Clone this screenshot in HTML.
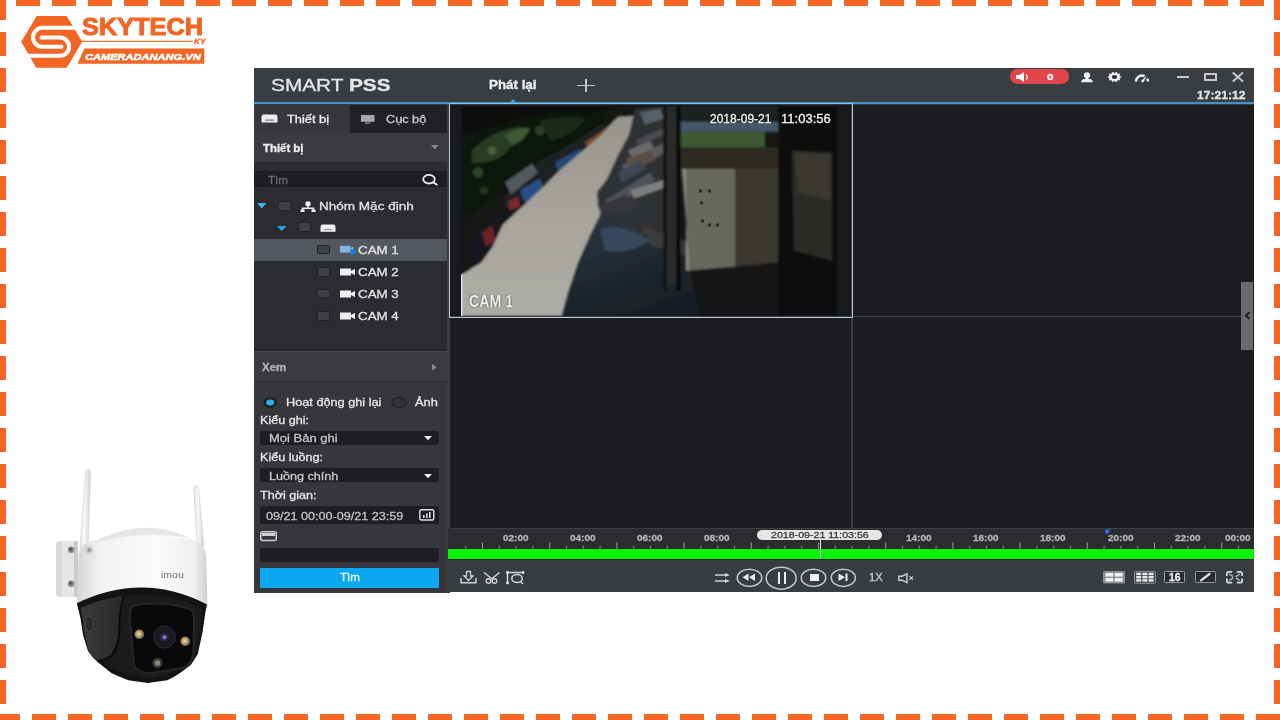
<!DOCTYPE html>
<html><head><meta charset="utf-8">
<style>
*{margin:0;padding:0;box-sizing:border-box}
html,body{width:1280px;height:720px;overflow:hidden;background:#fff;font-family:"Liberation Sans",sans-serif;position:relative}
.a{position:absolute}
.t{position:absolute;white-space:nowrap;line-height:1;transform-origin:0 0;-webkit-text-stroke:0.3px currentColor}
svg{position:absolute;overflow:visible}
</style></head><body>

<svg style="left:0;top:0" width="1280" height="720">
<g stroke="#f26522" stroke-width="6" fill="none">
<line x1="16" y1="3" x2="1280" y2="3" stroke-dasharray="24 12"/>
<line x1="-4" y1="717" x2="1280" y2="717" stroke-dasharray="24 12"/>
<line x1="3" y1="-4" x2="3" y2="720" stroke-dasharray="24 12"/>
<line x1="1277" y1="-4" x2="1277" y2="720" stroke-dasharray="24 12"/>
</g></svg>
<svg style="left:0;top:0" width="220" height="80">
<polygon points="36.7,15.9 66.7,15.9 82.2,41.8 66.7,67.7 36.2,67.7 21.2,41.8" fill="#f26522"/>
<g fill="none" stroke="#fff" stroke-width="4">
<path d="M86,27.8 H42.5 A9.5,9.5 0 0 0 42.5,46.8 H61.5" stroke-linecap="butt"/>
<path d="M41.5,37.6 H60 A9.1,9.1 0 0 1 60,55.8 H16"/>
</g>
<circle cx="61.5" cy="46.8" r="2" fill="#fff"/>
<circle cx="41.5" cy="37.6" r="2" fill="#fff"/>
<rect x="81.2" y="40.8" width="111.6" height="1.1" fill="#f26522"/>
<polygon points="84.4,48.4 204.3,48.4 204.3,63.8 77.6,63.8" fill="#f26522"/>
</svg>
<div class="t" style="left:82.30px;top:14.86px;font-size:24.5px;color:#f26522;font-weight:bold;font-style:normal;transform:scaleX(1.0334813802528187);-webkit-text-stroke:1.0px #f26522">SKYTECH</div>
<div class="t" style="left:194.30px;top:39.10px;font-size:6.5px;color:#f26522;font-weight:bold;font-style:italic;transform:scaleX(1.2735326688815063);">KY</div>
<div class="t" style="left:85.40px;top:53.00px;font-size:8.5px;color:#fff;font-weight:bold;font-style:italic;transform:scaleX(1.303221446271683);-webkit-text-stroke:0.55px #fff">CAMERADANANG.VN</div>
<svg style="left:0;top:0" width="240" height="720">
<defs>
<linearGradient id="wh" x1="0" x2="1" y1="0" y2="0">
<stop offset="0" stop-color="#d4d4d4"/><stop offset="0.18" stop-color="#f2f2f2"/><stop offset="0.6" stop-color="#fbfbfb"/><stop offset="0.9" stop-color="#f0f0f0"/><stop offset="1" stop-color="#cfcfcf"/>
</linearGradient>
<linearGradient id="bk" x1="0" x2="1" y1="0" y2="0">
<stop offset="0" stop-color="#2e2e30"/><stop offset="0.35" stop-color="#19191b"/><stop offset="1" stop-color="#161618"/>
</linearGradient>
<linearGradient id="ant" x1="0" x2="1" y1="0" y2="0"><stop offset="0" stop-color="#e4e4e4"/><stop offset="0.45" stop-color="#f8f8f8"/><stop offset="1" stop-color="#d2d2d2"/></linearGradient>
<radialGradient id="led" cx="0.45" cy="0.45" r="0.6">
<stop offset="0" stop-color="#f6e2a8"/><stop offset="0.55" stop-color="#a8946a"/><stop offset="1" stop-color="#3a3630"/>
</radialGradient>
<radialGradient id="lens" cx="0.5" cy="0.5" r="0.5">
<stop offset="0" stop-color="#d0d0f0"/><stop offset="0.2" stop-color="#6a66b0"/><stop offset="0.5" stop-color="#2c2a48"/><stop offset="1" stop-color="#141418"/>
</radialGradient>
</defs>
<!-- bracket -->
<path d="M60,541 H78 V597 H60 Q56,597 56,593 V545 Q56,541 60,541 Z" fill="#e6e6e6"/>
<path d="M74,541 H78 V597 H74 Z" fill="#cacaca"/>
<path d="M60,541 H62 V597 H60 Q56,597 56,593 V545 Q56,541 60,541 Z" fill="#d8d8d8"/>
<circle cx="71.2" cy="549.8" r="3.3" fill="#8a8a8a"/><circle cx="70.6" cy="549.2" r="1.6" fill="#5a5a5a"/>
<circle cx="71.2" cy="583.7" r="3.3" fill="#8a8a8a"/><circle cx="70.6" cy="583.1" r="1.6" fill="#5a5a5a"/>
<!-- antennas -->
<path d="M85.7,472.2 A2.45,2.45 0 0 1 90.6,472.2 L87.8,556 L79.4,556 Z" fill="url(#ant)" stroke="#d4d4d4" stroke-width="0.7"/>
<path d="M193.6,488.2 A2.5,2.5 0 0 1 198.6,488.2 L203.7,546 L197.5,546 Z" fill="url(#ant)" stroke="#d0d0d0" stroke-width="0.7"/>
<!-- white dome body -->
<path d="M76.8,606 L78.5,556 Q80,543 92,541 Q143,530 194,540 Q205.5,544 206.2,556 L207.5,606 Z" fill="url(#wh)"/>
<path d="M90.5,543.3 Q143,515 190,538 Q143,530 90.5,543.3 Z" fill="#e6e6e6"/>
<circle cx="89.2" cy="550" r="4.2" fill="#d0d0d0"/><circle cx="89.2" cy="550" r="2" fill="#9a9a9a"/>
<!-- black body -->
<linearGradient id="arm" x1="0" x2="1" y1="0" y2="0"><stop offset="0" stop-color="#3a3a3d"/><stop offset="1" stop-color="#28282b"/></linearGradient>
<path d="M76.8,603.3 Q142.5,571.2 207,604.4 L205.4,612.2 L202.6,631.7 L197.8,653.9 Q194,660 190.8,665 L179.7,673.3 Q173,678 167.2,680.3 L147.8,683 L128.3,680.3 Q120,677 111.7,673.3 L97.8,662.2 Q92,657 88,651 L83.2,635.8 L80.4,617.8 Z" fill="#131315"/>
<path d="M81,608 Q142.5,580 203,609 L201,628 L197,650 Q188,668 165,676 L148,678 Q125,676 108,666 L97,657 Q90,650 87,640 L83.5,620 Z" fill="#1b1b1d"/>
<path d="M81,608 Q100,599 124,596 Q121,606 120,614 L119,636 Q117,650 111,656 Q104,661 97.8,660.8 Q91,657 88,649 L84,630 Z" fill="url(#arm)"/>
<path d="M124,596 Q121,606 120,614 L119,636 Q117,650 111,656 Q104,661 97.8,660.8" fill="none" stroke="#0c0c0e" stroke-width="2.2"/>
<path d="M133,606 Q160,600 190,609 Q194,612 194,620 L193.6,652 Q192,664 184,667.8 L150,673.3 Q137,673 133.9,665 L129.7,617.8 Q130,608 133,606 Z" fill="#09090b" stroke="#26262a" stroke-width="2"/>
<ellipse cx="89.4" cy="624" rx="4.2" ry="7.6" fill="#2a2a2d" stroke="#47474a" stroke-width="1"/>
<circle cx="164.4" cy="637.2" r="11" fill="#1a1a1e"/>
<circle cx="164.4" cy="637.2" r="11" fill="none" stroke="#2c2c30" stroke-width="1"/>
<circle cx="164.4" cy="637.2" r="6" fill="url(#lens)"/>
<circle cx="139.4" cy="634.4" r="4.9" fill="url(#led)"/>
<circle cx="185.3" cy="641.4" r="4.9" fill="url(#led)"/>
<circle cx="157.5" cy="662.9" r="5" fill="#3e3c38"/>
<circle cx="157.5" cy="662.9" r="2.6" fill="#8a867c"/>
</svg>
<div class="t" style="left:161.00px;top:570.68px;font-size:9px;color:#6a6a6a;font-weight:normal;font-style:normal;transform:scaleX(1.1256038647342996);letter-spacing:0.3px;-webkit-text-stroke:0">imou</div>
<div class="a" style="left:254.00px;top:68.00px;width:1000.00px;height:524.00px;background:#393c41;"></div>
<div class="a" style="left:254.00px;top:68.00px;width:1000.00px;height:34.00px;background:#3a3d42;"></div>
<div class="a" style="left:254.00px;top:102.00px;width:1000.00px;height:2.00px;background:#3b97c8;"></div>
<svg style="left:508px;top:99px" width="10" height="4"><polygon points="1.5,3.5 5,0.3 8.5,3.5" fill="#3aa8e0"/></svg>
<div class="t" style="left:271.00px;top:77.46px;font-size:17px;color:#e6e6e6;font-weight:normal;font-style:normal;transform:scaleX(1.2249078246620237);">SMART <b>PSS</b></div>
<div class="t" style="left:489.00px;top:78.64px;font-size:12px;color:#f0f0f0;font-weight:bold;font-style:normal;transform:scaleX(1.1126727570859687);">Phát lại</div>
<div class="a" style="left:576.50px;top:84.70px;width:18.50px;height:1.50px;background:#c8c8c8;"></div>
<div class="a" style="left:585.00px;top:78.50px;width:1.50px;height:13.50px;background:#c8c8c8;"></div>
<div class="a" style="left:1010.30px;top:69.00px;width:59.20px;height:14.60px;background:#e2454a;border-radius:7.3px"></div>
<svg style="left:1016px;top:71.5px" width="14" height="10">
<polygon points="0,3 3.5,3 8,0 8,10 3.5,7 0,7" fill="#fff"/>
<path d="M10,2.5 Q12.5,5 10,7.5" stroke="#fff" stroke-width="1.3" fill="none"/>
</svg>
<div class="t" style="left:1046.80px;top:72.98px;font-size:9px;color:#fff;font-weight:bold;font-style:normal;transform:scaleX(1.2948207171314743);">0</div>
<svg style="left:1080px;top:71px" width="15" height="13">
<circle cx="7" cy="4.3" r="3.1" fill="#eee"/>
<path d="M1.2,11.2 Q1.2,8.2 4.5,8 L9.5,8 Q12.8,8.2 12.8,11.2 Z" fill="#eee"/>
<rect x="5.6" y="6.5" width="2.8" height="2" fill="#eee"/>
</svg>
<svg style="left:1107px;top:70.8px" width="15" height="12">
<polygon points="14.70,6.00 12.43,7.25 13.32,9.29 10.55,9.26 9.72,11.33 7.50,10.03 5.28,11.33 4.45,9.26 1.68,9.29 2.57,7.25 0.30,6.00 2.57,4.75 1.68,2.71 4.45,2.74 5.28,0.67 7.50,1.97 9.72,0.67 10.55,2.74 13.32,2.71 12.43,4.75" fill="#eee"/>
<ellipse cx="7.5" cy="6" rx="2.6" ry="1.9" fill="#2a2c30"/>
</svg>
<svg style="left:1134px;top:71.5px" width="17" height="11">
<path d="M2,9.5 A6,6 0 0 1 10.6,4.1" stroke="#eee" stroke-width="2.4" fill="none"/>
<path d="M13.2,6.5 A6,6 0 0 1 14,9.5" stroke="#eee" stroke-width="2.4" fill="none"/>
<path d="M6.6,9.6 L12.8,3.6 L9.4,10.4 Z" fill="#eee"/>
</svg>
<div class="a" style="left:1176.70px;top:76.00px;width:12.60px;height:2.00px;background:#c8c8c8;"></div>
<div class="a" style="left:1204.00px;top:72.80px;width:13.00px;height:8.00px;background:transparent;border:2px solid #c8c8c8"></div>
<svg style="left:1232px;top:72px" width="12" height="10">
<path d="M0.8,0.5 L11,9.5 M11,0.5 L0.8,9.5" stroke="#c8c8c8" stroke-width="2"/>
</svg>
<div class="t" style="left:1197.00px;top:89.59px;font-size:11px;color:#e2e2e2;font-weight:bold;font-style:normal;transform:scaleX(1.0987514188422247);">17:21:12</div>
<div class="a" style="left:254.00px;top:104.50px;width:193.00px;height:488.00px;background:#35373b;"></div>
<div class="a" style="left:254.00px;top:104.50px;width:96.00px;height:28.00px;background:#35373b;"></div>
<div class="a" style="left:350.00px;top:104.50px;width:97.00px;height:28.00px;background:#1f2124;"></div>
<svg style="left:261px;top:114px" width="17" height="9">
<path d="M2.5,0.5 H14.5 Q16.5,0.5 16.5,3.5 V8.5 H0.5 V3.5 Q0.5,0.5 2.5,0.5 Z" fill="#eee"/>
<rect x="4" y="5.5" width="9" height="1.2" fill="#777"/>
</svg>
<div class="t" style="left:287.00px;top:114.09px;font-size:11px;color:#efefef;font-weight:normal;font-style:normal;transform:scaleX(1.164079822616408);">Thiết bị</div>
<svg style="left:360.5px;top:114.5px" width="14" height="9">
<rect x="0" y="0" width="13.5" height="6.8" fill="#a8a8a8"/>
<rect x="4" y="7.6" width="5.5" height="1" fill="#a8a8a8"/>
</svg>
<div class="t" style="left:385.60px;top:114.09px;font-size:11px;color:#c8c8c8;font-weight:normal;font-style:normal;transform:scaleX(1.153184165232358);">Cục bộ</div>
<div class="a" style="left:254.00px;top:132.50px;width:193.00px;height:29.50px;background:#393b3f;"></div>
<div class="t" style="left:262.50px;top:142.79px;font-size:11px;color:#f0f0f0;font-weight:bold;font-style:normal;transform:scaleX(1.0355407824085912);">Thiết bị</div>
<svg style="left:431px;top:145px" width="8" height="5"><polygon points="0,0 7.5,0 3.75,4.5" fill="#8a8a8a"/></svg>
<div class="a" style="left:254.00px;top:162.00px;width:193.00px;height:9.00px;background:#2b2d31;"></div>
<div class="a" style="left:254.00px;top:171.00px;width:193.00px;height:15.50px;background:#1d1e21;"></div>
<div class="t" style="left:268.00px;top:174.79px;font-size:11px;color:#6a6b6e;font-weight:normal;font-style:normal;transform:scaleX(1.0554089709762533);">Tìm</div>
<svg style="left:422px;top:173.5px" width="17" height="12">
<ellipse cx="7" cy="5.2" rx="5.8" ry="4.3" stroke="#e8e8e8" stroke-width="1.8" fill="none"/>
<path d="M11,8.3 L15.5,11" stroke="#e8e8e8" stroke-width="2"/>
</svg>
<div class="a" style="left:254.00px;top:186.50px;width:193.00px;height:164.50px;background:#2a2c30;"></div>
<div class="a" style="left:254.00px;top:349.00px;width:193.00px;height:2.00px;background:#232529;"></div>
<div class="a" style="left:254.00px;top:239.00px;width:193.00px;height:21.80px;background:#54575e;"></div>
<svg style="left:257px;top:203.3px" width="10" height="6"><polygon points="0,0 9.5,0 4.75,5.5" fill="#3ab4ee"/></svg>
<div class="a" style="left:278.00px;top:201.20px;width:13.00px;height:9.80px;background:#3e4044;border:1px solid #1f2124;border-radius:1px"></div>
<svg style="left:300px;top:200.5px" width="16" height="11">
<rect x="5.5" y="0.5" width="5" height="4.5" rx="1" fill="#eee"/>
<path d="M8,4.5 V7 M2.5,10 V7.2 H13.5 V10" stroke="#eee" stroke-width="1.4" fill="none"/>
<rect x="0.5" y="8.5" width="4" height="2.5" fill="#eee"/><rect x="11.5" y="8.5" width="4" height="2.5" fill="#eee"/>
</svg>
<div class="t" style="left:318.75px;top:201.19px;font-size:11px;color:#e0e0e0;font-weight:normal;font-style:normal;transform:scaleX(1.2297209604153148);">Nhóm Mặc định</div>
<svg style="left:277px;top:226px" width="10" height="6"><polygon points="0,0 9.5,0 4.75,5" fill="#2ea7e8"/></svg>
<div class="a" style="left:297.80px;top:222.20px;width:13.00px;height:9.80px;background:#3e4044;border:1px solid #1f2124;border-radius:1px"></div>
<svg style="left:319.5px;top:224px" width="17" height="9">
<path d="M2.5,0.5 H13.5 Q15.5,0.5 15.5,3.5 V7.8 H0.5 V3.5 Q0.5,0.5 2.5,0.5 Z" fill="#eee"/>
<rect x="4" y="5" width="8" height="1" fill="#888"/>
</svg>
<div class="a" style="left:316.70px;top:244.60px;width:13.50px;height:9.80px;background:#3e4146;border:1.2px solid #1f2124;border-radius:1.5px"></div>
<svg style="left:339.5px;top:245px" width="17" height="10">
<rect x="0" y="0.8" width="10.5" height="6.8" fill="#7fb8e8"/><polygon points="10.5,3.2 13.5,1.2 13.5,7.2 10.5,5.2" fill="#7fb8e8"/>
<circle cx="12.8" cy="6.8" r="2.8" fill="#1e7fe0"/>
</svg>
<div class="t" style="left:358.30px;top:244.89px;font-size:11px;color:#e2e2e2;font-weight:normal;font-style:normal;transform:scaleX(1.2135633551457465);">CAM 1</div>
<div class="a" style="left:316.70px;top:266.90px;width:13.00px;height:9.80px;background:#3e4044;border:1px solid #1f2124;border-radius:1px"></div>
<svg style="left:339.5px;top:267.7px" width="17" height="9">
<rect x="0" y="0.5" width="11" height="7" fill="#eee"/><polygon points="11,3 15,0.8 15,7.2 11,5" fill="#eee"/>
</svg>
<div class="t" style="left:358.30px;top:266.79px;font-size:11px;color:#e2e2e2;font-weight:normal;font-style:normal;transform:scaleX(1.2135633551457465);">CAM 2</div>
<div class="a" style="left:316.70px;top:288.70px;width:13.00px;height:9.80px;background:#3e4044;border:1px solid #1f2124;border-radius:1px"></div>
<svg style="left:339.5px;top:289.5px" width="17" height="9">
<rect x="0" y="0.5" width="11" height="7" fill="#eee"/><polygon points="11,3 15,0.8 15,7.2 11,5" fill="#eee"/>
</svg>
<div class="t" style="left:358.30px;top:288.59px;font-size:11px;color:#e2e2e2;font-weight:normal;font-style:normal;transform:scaleX(1.2135633551457465);">CAM 3</div>
<div class="a" style="left:316.70px;top:310.80px;width:13.00px;height:9.80px;background:#3e4044;border:1px solid #1f2124;border-radius:1px"></div>
<svg style="left:339.5px;top:311.6px" width="17" height="9">
<rect x="0" y="0.5" width="11" height="7" fill="#eee"/><polygon points="11,3 15,0.8 15,7.2 11,5" fill="#eee"/>
</svg>
<div class="t" style="left:358.30px;top:310.69px;font-size:11px;color:#e2e2e2;font-weight:normal;font-style:normal;transform:scaleX(1.2135633551457465);">CAM 4</div>
<div class="a" style="left:254.00px;top:351.00px;width:193.00px;height:30.00px;background:#393b3f;"></div>
<div class="a" style="left:254.00px;top:351.00px;width:193.00px;height:1.00px;background:#45474b;"></div>
<div class="a" style="left:254.00px;top:380.50px;width:193.00px;height:1.00px;background:#2a2c30;"></div>
<div class="t" style="left:261.70px;top:362.09px;font-size:11px;color:#b4b4b4;font-weight:bold;font-style:normal;transform:scaleX(1.0474137931034484);">Xem</div>
<svg style="left:431.5px;top:364px" width="6" height="7"><polygon points="0,0 5,3.2 0,6.4" fill="#8a8a8a"/></svg>
<svg style="left:263px;top:396.5px" width="16" height="12">
<ellipse cx="7.2" cy="5.5" rx="6.8" ry="5.2" fill="#1e2023"/>
<ellipse cx="7.2" cy="5.5" rx="4" ry="3" fill="#2bb0f0"/>
</svg>
<div class="t" style="left:286.30px;top:397.09px;font-size:11px;color:#e6e6e6;font-weight:normal;font-style:normal;transform:scaleX(1.1555232558139534);">Hoạt động ghi lại</div>
<svg style="left:390.5px;top:396.5px" width="17" height="12">
<ellipse cx="8" cy="5.5" rx="7.2" ry="5" fill="#303236" stroke="#232528" stroke-width="1.4"/>
</svg>
<div class="t" style="left:414.70px;top:397.09px;font-size:11px;color:#e6e6e6;font-weight:normal;font-style:normal;transform:scaleX(1.1644535240040859);">Ảnh</div>
<div class="t" style="left:260.00px;top:414.59px;font-size:11px;color:#e6e6e6;font-weight:normal;font-style:normal;transform:scaleX(1.1445923849567858);">Kiểu ghi:</div>
<div class="a" style="left:260.00px;top:430.80px;width:179.00px;height:14.20px;background:#1d1e21;border-radius:2px"></div>
<div class="t" style="left:268.60px;top:432.99px;font-size:11px;color:#c4c4c4;font-weight:normal;font-style:normal;transform:scaleX(1.182);">Mọi Bản ghi</div>
<svg style="left:424px;top:436px" width="9" height="5"><polygon points="0,0 8,0 4,4.2" fill="#eee"/></svg>
<div class="t" style="left:260.00px;top:452.29px;font-size:11px;color:#e6e6e6;font-weight:normal;font-style:normal;transform:scaleX(1.1444141689373297);">Kiểu luồng:</div>
<div class="a" style="left:260.00px;top:468.40px;width:179.00px;height:13.80px;background:#1d1e21;border-radius:2px"></div>
<div class="t" style="left:269.00px;top:470.79px;font-size:11px;color:#c8c8c8;font-weight:normal;font-style:normal;transform:scaleX(1.145);">Luồng chính</div>
<svg style="left:424px;top:473.5px" width="9" height="5"><polygon points="0,0 8,0 4,4.2" fill="#eee"/></svg>
<div class="t" style="left:260.00px;top:490.29px;font-size:11px;color:#e6e6e6;font-weight:normal;font-style:normal;transform:scaleX(1.145);">Thời gian:</div>
<div class="a" style="left:260.00px;top:505.50px;width:179.00px;height:18.50px;background:#1d1e21;border-radius:2px"></div>
<div class="t" style="left:266.00px;top:510.59px;font-size:11px;color:#c0c0c0;font-weight:normal;font-style:normal;transform:scaleX(1.1452164484110436);">09/21 00:00-09/21 23:59</div>
<svg style="left:419px;top:509px" width="16" height="12">
<rect x="0.8" y="0.8" width="14" height="10.2" rx="1.5" fill="none" stroke="#e0e0e0" stroke-width="1.4"/>
<rect x="4" y="6" width="1.6" height="3" fill="#ddd"/><rect x="7" y="4.5" width="1.6" height="4.5" fill="#ddd"/><rect x="10" y="3" width="1.6" height="6" fill="#ddd"/>
</svg>
<svg style="left:260px;top:531px" width="18" height="11">
<rect x="0.8" y="0.8" width="15.5" height="8.8" rx="2" fill="none" stroke="#cfcfcf" stroke-width="1.5"/>
<rect x="2" y="2" width="13" height="3" fill="#cfcfcf"/>
</svg>
<div class="a" style="left:260.00px;top:547.80px;width:179.00px;height:14.00px;background:#1d1e21;border-radius:2px"></div>
<div class="a" style="left:260.00px;top:567.80px;width:179.00px;height:20.00px;background:#0aa8f0;border-radius:1px"></div>
<div class="t" style="left:339.50px;top:572.49px;font-size:11px;color:#e8f4fb;font-weight:normal;font-style:normal;transform:scaleX(1.0554089709762533);">Tìm</div>
<div class="a" style="left:446.80px;top:104.50px;width:3.20px;height:488.00px;background:#3a3c40;"></div>
<div class="a" style="left:450.00px;top:104.50px;width:804.00px;height:423.50px;background:#1b1d21;"></div>
<div class="a" style="left:450px;top:105px;width:402px;height:211px;background:#17191c"></div>
<svg style="left:461px;top:105.5px" width="377" height="210" viewBox="461 105.5 377 210">
<defs>
<filter id="bl" x="-5%" y="-5%" width="110%" height="110%"><feGaussianBlur stdDeviation="1.3"/></filter>
<filter id="bl2"><feGaussianBlur stdDeviation="0.6"/></filter>
<linearGradient id="pth" x1="0" y1="0" x2="0" y2="1"><stop offset="0" stop-color="#96948c"/><stop offset="0.5" stop-color="#a6a49c"/><stop offset="1" stop-color="#adaca6"/></linearGradient>
<linearGradient id="gnd" x1="0" y1="0" x2="1" y2="1"><stop offset="0" stop-color="#2c3844"/><stop offset="0.45" stop-color="#1e252c"/><stop offset="1" stop-color="#101214"/></linearGradient>
</defs>
<clipPath id="vc"><rect x="461" y="105.5" width="377" height="210"/></clipPath>
<g clip-path="url(#vc)">
<rect x="461" y="105.5" width="377" height="210" fill="#161816"/>
<g filter="url(#bl)">
<!-- top-left very dark sky/wall -->
<path d="M461,105.5 H620 L600,112 L540,115 L461,135 Z" fill="#0b0d0b"/>
<!-- trees -->
<path d="M463,140 Q500,118 560,112 Q600,110 615,118 Q585,150 540,168 Q500,190 470,215 L463,215 Z" fill="#111510"/>
<path d="M472,150 Q492,130 520,126 Q515,148 498,158 Q482,164 472,162 Z" fill="#2a3e24"/><path d="M505,135 Q520,125 530,128 Q525,140 512,145 Z" fill="#3e5a34"/>
<circle cx="478" cy="172" r="5" fill="#2e4428"/><circle cx="492" cy="150" r="4" fill="#46663a"/><circle cx="540" cy="130" r="5" fill="#2c3c26"/><circle cx="560" cy="122" r="4" fill="#3a5030"/><circle cx="484" cy="190" r="4" fill="#263622"/>
<path d="M540,120 Q565,115 585,118 Q575,135 550,140 Z" fill="#1e2a1a"/>
<!-- objects along left of path -->
<path d="M505,195 L540,160 L560,150 L600,125 L615,122 L600,140 L560,172 L530,195 L505,215 Z" fill="#1e2024"/>
<path d="M505,182 L532,163 L538,172 L511,194 Z" fill="#55585c"/>
<path d="M520,190 L540,178 L545,192 L525,203 Z" fill="#2c5088"/>
<path d="M555,162 L580,148 L585,162 L560,175 Z" fill="#284878"/>
<path d="M585,142 L610,125 L615,132 L590,150 Z" fill="#7a4a30"/>
<path d="M470,240 L500,210 L525,200 L510,230 L490,255 L470,272 Z" fill="#18191c"/>
<path d="M482,232 L492,225 L496,240 L486,246 Z" fill="#6a2424"/>
<path d="M508,201 L518,196 L520,206 L510,210 Z" fill="#7a2a2a"/>
<!-- concrete path -->
<path d="M617.8,116 L635,115 L628.75,135 L617.8,155.6 L606.9,179 L597.5,191.5 L598,205 L601,213 L591.1,232.8 L578,262.3 L568.2,291.8 L561.6,315.5 L461,315.5 L461,274 L481.3,262.3 L492.8,245.9 L502.6,224.6 L519.4,208.7 L538,191.5 L560,169.6 L581.9,150.9 L600.6,135 Z" fill="url(#pth)"/>
<!-- junk right of path -->
<path d="M635,108 L668,106 L668,232 L640,236 L601,215 L597,195 L607,179 L618,156 L629,135 Z" fill="#2e3034"/>
<path d="M622,165 L668,140 L668,150 L626,176 Z" fill="#5a5c60"/>
<path d="M605,200 L650,172 L655,180 L612,208 Z" fill="#50535a"/>
<path d="M640,112 L660,108 L664,118 L645,124 Z" fill="#55606a"/>
<path d="M628,150 L650,140 L654,148 L632,158 Z" fill="#6a6a66"/>
<path d="M626,158 L652,150 L655,160 L630,168 Z" fill="#5a5044"/>
<path d="M618,172 L640,160 L646,168 L622,182 Z" fill="#3e4858"/>
<path d="M636,140 L662,128 L664,134 L638,146 Z" fill="#4a4c50"/>
<path d="M630,190 L668,178 L668,186 L634,198 Z" fill="#7e7e7a"/>
<path d="M600,205 L625,195 L640,205 L620,215 L603,214 Z" fill="#34363a"/>
<!-- ground right of path -->
<path d="M601,215 L640,236 L700,250 L780,275 L838,280 L838,315.5 L561.6,315.5 L568.2,291.8 L578,262.3 L591.1,232.8 Z" fill="url(#gnd)"/>
<path d="M600,228 Q625,222 650,240 Q630,255 605,250 Z" fill="#34485a"/>
<path d="M640,225 L700,245 L705,260 L650,245 Z" fill="#3a3a3a"/>
<!-- top-middle: roof / green / box -->
<path d="M678,105.5 H778 V121.6 H678 Z" fill="#1c2024"/>
<path d="M678,121.6 H778 V131.3 H678 Z" fill="#44586a"/>
<path d="M678,131.3 H765 V147 H678 Z" fill="#3e5a32"/>
<path d="M678,147 H778 V168.5 H678 Z" fill="#2e2a24"/>
<path d="M682,168.5 H735 V268 L690,270 Z" fill="#69675f"/><path d="M682,168.5 H686 V270 L690,270 Z" fill="#8a887e"/>
<path d="M735,168.5 H778 V262 L735,268 Z" fill="#3a3832"/>
<path d="M690,270 L778,262 L838,265 L838,315.5 L700,315.5 Z" fill="#131314"/>
<!-- pole -->
<path d="M663,105.5 H667 V290 H663 Z" fill="#121212"/><path d="M667,105.5 H676 V285 H667 Z" fill="#2a2a2a"/><path d="M676,105.5 H681 V290 H676 Z" fill="#101010"/>
<!-- right dark -->
<path d="M778,105.5 H838 V315.5 H778 Z" fill="#0f0f10"/>
<path d="M792,150 L832,152 L832,260 L794,250 Z" fill="#2a2926"/><path d="M795,152 L830,154 L830,200 L797,192 Z" fill="#3a3832"/>
</g>
<g fill="#2c2b28" filter="url(#bl2)">
<rect x="699" y="189" width="3" height="3"/><rect x="708" y="189" width="3" height="3"/><rect x="700" y="201" width="3" height="3"/><rect x="701" y="219" width="3" height="3"/><rect x="708" y="223" width="3" height="3"/><rect x="716" y="223" width="3" height="3"/>
</g>
<rect x="461" y="274" width="1.6" height="42" fill="#e0e0e0"/>
</g>
</svg>
<div class="t" style="left:710.40px;top:112.52px;font-size:12.5px;color:#f4f4f4;font-weight:normal;font-style:normal;transform:scaleX(0.9616888193901485);text-shadow:0 0 1px #000,0 0 1px #000">2018-09-21</div>
<div class="t" style="left:780.70px;top:112.52px;font-size:12.5px;color:#f4f4f4;font-weight:normal;font-style:normal;transform:scaleX(1.0433689503456944);text-shadow:0 0 1px #000,0 0 1px #000">11:03:56</div>
<div class="t" style="left:469.00px;top:293.66px;font-size:16px;color:#ececec;font-weight:bold;font-style:normal;transform:scaleX(0.8838891120932101);text-shadow:0 0 1px #000,0 0 1.5px #000">CAM 1</div>
<div class="a" style="left:851.30px;top:104.50px;width:1.30px;height:423.50px;background:#3c3f44;"></div>
<div class="a" style="left:450.00px;top:316.20px;width:804.00px;height:1.30px;background:#3c3f44;"></div>
<div class="a" style="left:448.5px;top:103px;width:404px;height:214.5px;border:1.4px solid #c2c8d0;border-top-color:#7cc4ea"></div>
<div class="a" style="left:1240.60px;top:282.00px;width:12.50px;height:67.50px;background:#686a6d;"></div>
<svg style="left:1243px;top:311px" width="8" height="9"><path d="M6.5,1.2 L2.8,4.5 L6.5,7.8" stroke="#1a1a1a" stroke-width="1.9" fill="none"/></svg>
<div class="a" style="left:448.20px;top:528.00px;width:805.80px;height:32.00px;background:#2a2c30;"></div>
<div class="a" style="left:448.20px;top:549.00px;width:805.80px;height:10.00px;background:#08f208;"></div>
<div class="a" style="left:450.00px;top:528.00px;width:804.00px;height:1.20px;background:#3c3e42;"></div>
<svg style="left:450px;top:541px" width="804" height="8"><rect x="15.1" y="4.7" width="1.2" height="3.3" fill="#7a7c80"/><rect x="31.9" y="1.4" width="1.2" height="6.6" fill="#8a8c90"/><rect x="48.7" y="4.7" width="1.2" height="3.3" fill="#7a7c80"/><rect x="65.5" y="4.7" width="1.2" height="3.3" fill="#7a7c80"/><rect x="82.3" y="4.7" width="1.2" height="3.3" fill="#7a7c80"/><rect x="99.1" y="1.4" width="1.2" height="6.6" fill="#8a8c90"/><rect x="115.9" y="4.7" width="1.2" height="3.3" fill="#7a7c80"/><rect x="132.7" y="4.7" width="1.2" height="3.3" fill="#7a7c80"/><rect x="149.5" y="4.7" width="1.2" height="3.3" fill="#7a7c80"/><rect x="166.3" y="1.4" width="1.2" height="6.6" fill="#8a8c90"/><rect x="183.1" y="4.7" width="1.2" height="3.3" fill="#7a7c80"/><rect x="199.9" y="4.7" width="1.2" height="3.3" fill="#7a7c80"/><rect x="216.7" y="4.7" width="1.2" height="3.3" fill="#7a7c80"/><rect x="233.5" y="1.4" width="1.2" height="6.6" fill="#8a8c90"/><rect x="250.3" y="4.7" width="1.2" height="3.3" fill="#7a7c80"/><rect x="267.1" y="4.7" width="1.2" height="3.3" fill="#7a7c80"/><rect x="283.9" y="4.7" width="1.2" height="3.3" fill="#7a7c80"/><rect x="300.7" y="1.4" width="1.2" height="6.6" fill="#8a8c90"/><rect x="317.5" y="4.7" width="1.2" height="3.3" fill="#7a7c80"/><rect x="334.3" y="4.7" width="1.2" height="3.3" fill="#7a7c80"/><rect x="351.1" y="4.7" width="1.2" height="3.3" fill="#7a7c80"/><rect x="367.9" y="1.4" width="1.2" height="6.6" fill="#8a8c90"/><rect x="384.7" y="4.7" width="1.2" height="3.3" fill="#7a7c80"/><rect x="401.5" y="4.7" width="1.2" height="3.3" fill="#7a7c80"/><rect x="418.3" y="4.7" width="1.2" height="3.3" fill="#7a7c80"/><rect x="435.1" y="1.4" width="1.2" height="6.6" fill="#8a8c90"/><rect x="451.9" y="4.7" width="1.2" height="3.3" fill="#7a7c80"/><rect x="468.7" y="4.7" width="1.2" height="3.3" fill="#7a7c80"/><rect x="485.5" y="4.7" width="1.2" height="3.3" fill="#7a7c80"/><rect x="502.3" y="1.4" width="1.2" height="6.6" fill="#8a8c90"/><rect x="519.1" y="4.7" width="1.2" height="3.3" fill="#7a7c80"/><rect x="535.9" y="4.7" width="1.2" height="3.3" fill="#7a7c80"/><rect x="552.7" y="4.7" width="1.2" height="3.3" fill="#7a7c80"/><rect x="569.5" y="1.4" width="1.2" height="6.6" fill="#8a8c90"/><rect x="586.3" y="4.7" width="1.2" height="3.3" fill="#7a7c80"/><rect x="603.1" y="4.7" width="1.2" height="3.3" fill="#7a7c80"/><rect x="619.9" y="4.7" width="1.2" height="3.3" fill="#7a7c80"/><rect x="636.7" y="1.4" width="1.2" height="6.6" fill="#8a8c90"/><rect x="653.5" y="4.7" width="1.2" height="3.3" fill="#7a7c80"/><rect x="670.3" y="4.7" width="1.2" height="3.3" fill="#7a7c80"/><rect x="687.1" y="4.7" width="1.2" height="3.3" fill="#7a7c80"/><rect x="703.9" y="1.4" width="1.2" height="6.6" fill="#8a8c90"/><rect x="720.7" y="4.7" width="1.2" height="3.3" fill="#7a7c80"/><rect x="737.5" y="4.7" width="1.2" height="3.3" fill="#7a7c80"/><rect x="754.3" y="4.7" width="1.2" height="3.3" fill="#7a7c80"/><rect x="771.1" y="1.4" width="1.2" height="6.6" fill="#8a8c90"/><rect x="787.9" y="4.7" width="1.2" height="3.3" fill="#7a7c80"/></svg>
<div class="t" style="left:502.70px;top:533.71px;font-size:9.2px;color:#b4b4b4;font-weight:bold;font-style:normal;transform:scaleX(1.0882317933719883);">02:00</div>
<div class="t" style="left:569.90px;top:533.71px;font-size:9.2px;color:#b4b4b4;font-weight:bold;font-style:normal;transform:scaleX(1.0882317933719883);">04:00</div>
<div class="t" style="left:637.10px;top:533.71px;font-size:9.2px;color:#b4b4b4;font-weight:bold;font-style:normal;transform:scaleX(1.0882317933719883);">06:00</div>
<div class="t" style="left:704.30px;top:533.71px;font-size:9.2px;color:#b4b4b4;font-weight:bold;font-style:normal;transform:scaleX(1.0882317933719883);">08:00</div>
<div class="t" style="left:905.90px;top:533.71px;font-size:9.2px;color:#b4b4b4;font-weight:bold;font-style:normal;transform:scaleX(1.0882317933719883);">14:00</div>
<div class="t" style="left:973.10px;top:533.71px;font-size:9.2px;color:#b4b4b4;font-weight:bold;font-style:normal;transform:scaleX(1.0882317933719883);">16:00</div>
<div class="t" style="left:1040.30px;top:533.71px;font-size:9.2px;color:#b4b4b4;font-weight:bold;font-style:normal;transform:scaleX(1.0882317933719883);">18:00</div>
<div class="t" style="left:1107.50px;top:533.71px;font-size:9.2px;color:#b4b4b4;font-weight:bold;font-style:normal;transform:scaleX(1.0882317933719883);">20:00</div>
<div class="t" style="left:1174.70px;top:533.71px;font-size:9.2px;color:#b4b4b4;font-weight:bold;font-style:normal;transform:scaleX(1.0882317933719883);">22:00</div>
<div class="t" style="left:1224.80px;top:533.71px;font-size:9.2px;color:#b4b4b4;font-weight:bold;font-style:normal;transform:scaleX(1.0882317933719883);">00:00</div>
<div class="a" style="left:756.90px;top:529.75px;width:125.60px;height:10.30px;background:#e6e6e6;border-radius:5px"></div>
<div class="t" style="left:771.00px;top:530.58px;font-size:9px;color:#3c3c3c;font-weight:normal;font-style:normal;transform:scaleX(1.1791314837153195);">2018-09-21 11:03:56</div>
<div class="a" style="left:819.60px;top:540.00px;width:1.50px;height:18.00px;background:#e8e8e8;"></div>
<svg style="left:1103px;top:527px" width="8" height="8"><circle cx="4" cy="4.5" r="2.2" fill="#2a6fe0"/><circle cx="6.5" cy="2" r="0.8" fill="#2a6fe0"/></svg>
<div class="a" style="left:450.00px;top:559.00px;width:804.00px;height:1.00px;background:#26282b;"></div>
<svg style="left:459.5px;top:571px" width="18" height="13">
<path d="M6.5,0.5 H10.5 V5 H13 L8.5,9.5 L4,5 H6.5 Z" fill="none" stroke="#d0d0d0" stroke-width="1.3"/>
<path d="M1,7 V11.8 H16 V7" fill="none" stroke="#d0d0d0" stroke-width="1.5"/>
</svg>
<svg style="left:483px;top:571.5px" width="18" height="12">
<path d="M1,0.5 L9,7 M16.5,0.5 L8.5,7" stroke="#d0d0d0" stroke-width="1.5"/>
<circle cx="5.5" cy="9" r="2.3" fill="none" stroke="#d0d0d0" stroke-width="1.4"/>
<circle cx="11.5" cy="9" r="2.3" fill="none" stroke="#d0d0d0" stroke-width="1.4"/>
</svg>
<svg style="left:506px;top:570.5px" width="19" height="14">
<path d="M1.5,1.5 H17.5 M1.5,1.5 V12" stroke="#d0d0d0" stroke-width="1.5"/>
<circle cx="1.5" cy="1.5" r="1.4" fill="#eee"/><circle cx="17" cy="1.5" r="1.4" fill="#eee"/><circle cx="1.5" cy="12" r="1.4" fill="#eee"/>
<ellipse cx="11" cy="7.5" rx="5.2" ry="4" fill="none" stroke="#d0d0d0" stroke-width="1.6"/>
<path d="M14.5,10.5 L17,13" stroke="#d0d0d0" stroke-width="1.6"/>
</svg>
<svg style="left:714.5px;top:572.5px" width="16" height="11">
<path d="M0,2 H13 M0,8 H13" stroke="#d0d0d0" stroke-width="1.5"/>
<polygon points="10,0 15,2 10,4" fill="#d0d0d0"/><polygon points="10,6 15,8 10,10" fill="#d0d0d0"/>
</svg>
<svg style="left:735.5px;top:567.6px" width="27.0" height="19.6"><ellipse cx="13.5" cy="9.8" rx="12.3" ry="8.600000000000001" fill="none" stroke="#c4c4c4" stroke-width="1.5"/></svg>
<svg style="left:765.2px;top:565.5px" width="32.4" height="24.4"><ellipse cx="16.2" cy="12.2" rx="15.0" ry="11.0" fill="none" stroke="#c4c4c4" stroke-width="1.5"/></svg>
<svg style="left:800.4px;top:567.6px" width="27.0" height="19.6"><ellipse cx="13.5" cy="9.8" rx="12.3" ry="8.600000000000001" fill="none" stroke="#c4c4c4" stroke-width="1.5"/></svg>
<svg style="left:829.9px;top:567.6px" width="26.6" height="19.6"><ellipse cx="13.3" cy="9.8" rx="12.100000000000001" ry="8.600000000000001" fill="none" stroke="#c4c4c4" stroke-width="1.5"/></svg>
<svg style="left:742px;top:573px" width="14" height="9"><polygon points="6.5,0.5 0.5,4.3 6.5,8 " fill="#eee"/><polygon points="13,0.5 7,4.3 13,8" fill="#eee"/></svg>
<div class="a" style="left:777.50px;top:571.50px;width:2.20px;height:12.00px;background:#eee;"></div>
<div class="a" style="left:783.50px;top:571.50px;width:2.20px;height:12.00px;background:#eee;"></div>
<div class="a" style="left:809.50px;top:574.00px;width:9.00px;height:7.00px;background:#eee;"></div>
<svg style="left:838px;top:573px" width="11" height="9"><polygon points="0.5,0.5 7,4.3 0.5,8" fill="#eee"/><rect x="7.5" y="0.5" width="2" height="7.5" fill="#eee"/></svg>
<div class="t" style="left:869.30px;top:573.13px;font-size:10px;color:#c8c8c8;font-weight:normal;font-style:normal;transform:scaleX(1.1201962387571545);">1X</div>
<svg style="left:897.5px;top:572.5px" width="17" height="11">
<path d="M0.8,3.2 H4 L9,0.8 V9.6 L4,7.2 H0.8 Z" fill="none" stroke="#d0d0d0" stroke-width="1.4"/>
<path d="M11.5,3.3 L15,6.8 M15,3.3 L11.5,6.8" stroke="#d0d0d0" stroke-width="1.1"/>
</svg>
<svg style="left:1103px;top:570.5px" width="23" height="13">
<rect x="0" y="0" width="22" height="12.5" rx="1.5" fill="#8e8e8e"/>
<rect x="2.5" y="2" width="7.8" height="3.6" fill="#f0f0f0"/><rect x="11.8" y="2" width="7.8" height="3.6" fill="#f0f0f0"/>
<rect x="2.5" y="7" width="7.8" height="3.6" fill="#f0f0f0"/><rect x="11.8" y="7" width="7.8" height="3.6" fill="#f0f0f0"/>
</svg>
<svg style="left:1133.5px;top:570.5px" width="22" height="13"><rect x="0.5" y="0.5" width="21" height="11.8" rx="1" fill="#4a4c50" stroke="#8a8a8a" stroke-width="1"/><rect x="2.2" y="1.8" width="5" height="2.4" fill="#e8e8e8"/><rect x="8.4" y="1.8" width="5" height="2.4" fill="#e8e8e8"/><rect x="14.6" y="1.8" width="5" height="2.4" fill="#e8e8e8"/><rect x="2.2" y="5.0" width="5" height="2.4" fill="#e8e8e8"/><rect x="8.4" y="5.0" width="5" height="2.4" fill="#e8e8e8"/><rect x="14.6" y="5.0" width="5" height="2.4" fill="#e8e8e8"/><rect x="2.2" y="8.2" width="5" height="2.4" fill="#e8e8e8"/><rect x="8.4" y="8.2" width="5" height="2.4" fill="#e8e8e8"/><rect x="14.6" y="8.2" width="5" height="2.4" fill="#e8e8e8"/></svg>
<div class="a" style="left:1164px;top:570.5px;width:21.4px;height:12.5px;border:1.5px solid #9a9a9a;border-radius:1.5px;background:#2a2c30"></div>
<div class="t" style="left:1169.00px;top:573.34px;font-size:10px;color:#f0f0f0;font-weight:bold;font-style:normal;transform:scaleX(1.0341726618705036);">16</div>
<div class="a" style="left:1195px;top:570.5px;width:20.5px;height:12.5px;border:1.5px solid #9a9a9a;border-radius:1.5px;background:#2a2c30"></div>
<svg style="left:1199px;top:572px" width="13" height="10"><path d="M2,8.3 L10.5,2" stroke="#e4e4e4" stroke-width="2.2" stroke-linecap="round"/></svg>
<svg style="left:1226px;top:570.5px" width="17" height="13">
<g stroke="#d8d8d8" stroke-width="1.8" fill="none">
<path d="M0.9,5 V2.6 Q0.9,0.9 2.6,0.9 H6.2"/>
<path d="M16.1,5 V2.6 Q16.1,0.9 14.4,0.9 H10.8"/>
<path d="M0.9,7.5 V9.9 Q0.9,11.6 2.6,11.6 H6.2"/>
<path d="M16.1,7.5 V9.9 Q16.1,11.6 14.4,11.6 H10.8"/>
</g>
<g stroke="#bdbdbd" stroke-width="1.3">
<path d="M3.2,3 L7.2,5.6 M13.8,3 L9.8,5.6 M3.2,9.5 L7.2,6.9 M13.8,9.5 L9.8,6.9"/>
</g></svg>
</body></html>
